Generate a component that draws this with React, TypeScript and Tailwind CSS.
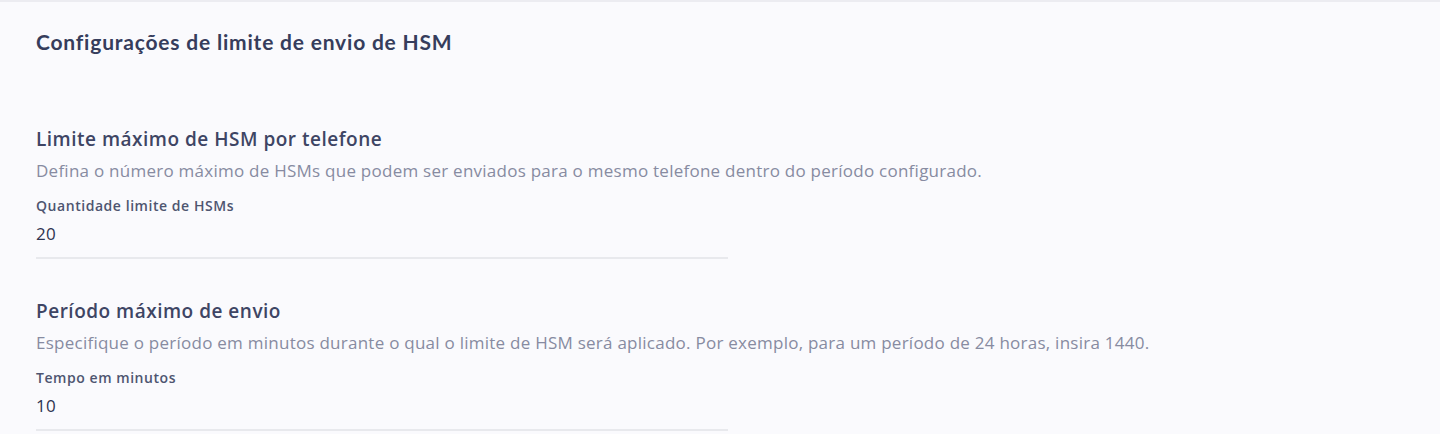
import React from "react";

function Field({ title, desc, label, value }: { title: string; desc: string; label: string; value: string }) {
  return (
    <div className="flex flex-col">
      <h3 className="text-[19px] leading-[26px] font-semibold tracking-[0.5px] text-[#3e4564]">{title}</h3>
      <p className="mt-[7px] text-[17px] leading-[24px] tracking-[0.25px] text-[#878ba1]">{desc}</p>
      <label className="mt-[13px] text-[14px] leading-[20px] font-semibold tracking-[0.55px] text-[#4e5570]">{label}</label>
      <div className="mt-[6px] w-[692px] border-b-2 border-[#e8e9ed] pb-[11px] text-[17px] leading-[24px] tracking-[0.3px] text-[#2e3450]">{value}</div>
    </div>
  );
}

export default function App() {
  return (
    <div className="min-h-[434px] w-full bg-[#fafafd] border-t-2 border-[#ececf1]" style={{ fontFamily: "'Open Sans', 'Noto Sans', sans-serif" }}>
      <div className="px-[36px] pt-[26px]">
        <h2 className="text-[21px] leading-[28px] font-bold tracking-[0.8px] text-[#363d5c]" style={{ fontFamily: "Lato, sans-serif" }}>
          Configurações de limite de envio de HSM
        </h2>
        <div className="mt-[70px] flex flex-col gap-[39px]">
          <Field
            title="Limite máximo de HSM por telefone"
            desc="Defina o número máximo de HSMs que podem ser enviados para o mesmo telefone dentro do período configurado."
            label="Quantidade limite de HSMs"
            value="20"
          />
          <Field
            title="Período máximo de envio"
            desc="Especifique o período em minutos durante o qual o limite de HSM será aplicado. Por exemplo, para um período de 24 horas, insira 1440."
            label="Tempo em minutos"
            value="10"
          />
        </div>
      </div>
    </div>
  );
}
